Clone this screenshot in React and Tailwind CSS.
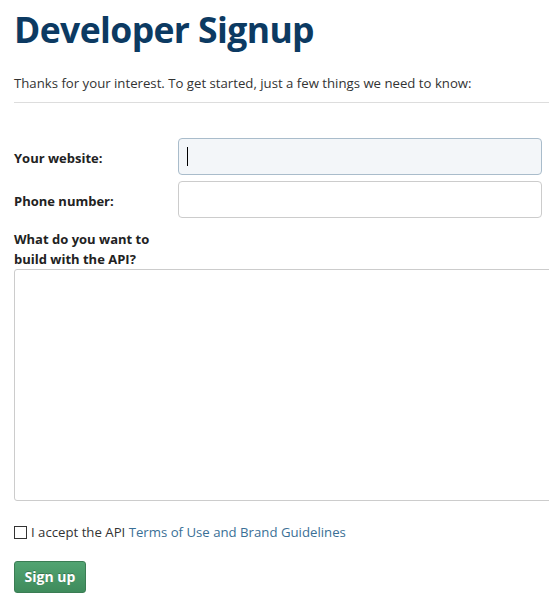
export default function App() {
  return (
    <div className="min-h-[607px] bg-white px-[14px] pt-[5px] text-[#222]" style={{ fontFamily: '"Open Sans", "Noto Sans", sans-serif' }}>
      <h1 className="text-[35.5px] font-bold leading-[48px] text-[#0c3a62] tracking-[-0.6px]">Developer Signup</h1>
      <p className="mt-[20px] text-[13.2px] leading-[20px] text-[#333]">
        Thanks for your interest. To get started, just a few things we need to know:
      </p>
      <div className="mt-[9px] -mr-[14px] h-px bg-[#ddd]" />

      <form className="mt-[35px]">
        <div className="flex items-center">
          <label className="w-[164px] shrink-0 pt-[4px] text-[13px] font-bold text-[#222]">Your website:</label>
          <div className="relative shrink-0">
            <input
              type="text"
              className="block h-[37px] w-[364px] rounded-[4px] border border-[#a9bccb] bg-[#f3f6f9] px-[8px] text-[13px] outline-none"
            />
            <span className="pointer-events-none absolute left-[9px] top-[9px] h-[19px] w-px bg-black" />
          </div>
        </div>
        <div className="mt-[6px] flex items-center">
          <label className="w-[164px] shrink-0 pt-[4px] text-[13px] font-bold text-[#222]">Phone number:</label>
          <input
            type="text"
            className="h-[37px] w-[364px] shrink-0 rounded-[4px] border border-[#ccc] bg-white px-[8px] text-[13px] outline-none"
          />
        </div>
        <label className="mt-[11px] block text-[13px] font-bold leading-[20px] text-[#222]">
          What do you want to
          <br />
          build with the API?
        </label>
        <textarea className="mt-0 block h-[232px] w-[560px] resize-none rounded-[3px] border border-[#ccc] bg-white outline-none" />

        <div className="mt-[22px] flex items-center gap-[4px] text-[13.2px] text-[#333]">
          <input type="checkbox" className="m-0 h-[13px] w-[13px] appearance-none border border-[#333] bg-white" />
          <span>
            I accept the API <a className="text-[#3a6f96]">Terms of Use and Brand Guidelines</a>
          </span>
        </div>

        <button
          type="button"
          className="mt-[18px] h-[32px] w-[72px] rounded-[3px] border border-[#3b7d54] bg-gradient-to-b from-[#52a472] to-[#3f8b5c] text-[14px] font-bold text-white [text-shadow:0_-1px_0_rgba(0,0,0,0.25)]"
        >
          Sign up
        </button>
      </form>
    </div>
  );
}
